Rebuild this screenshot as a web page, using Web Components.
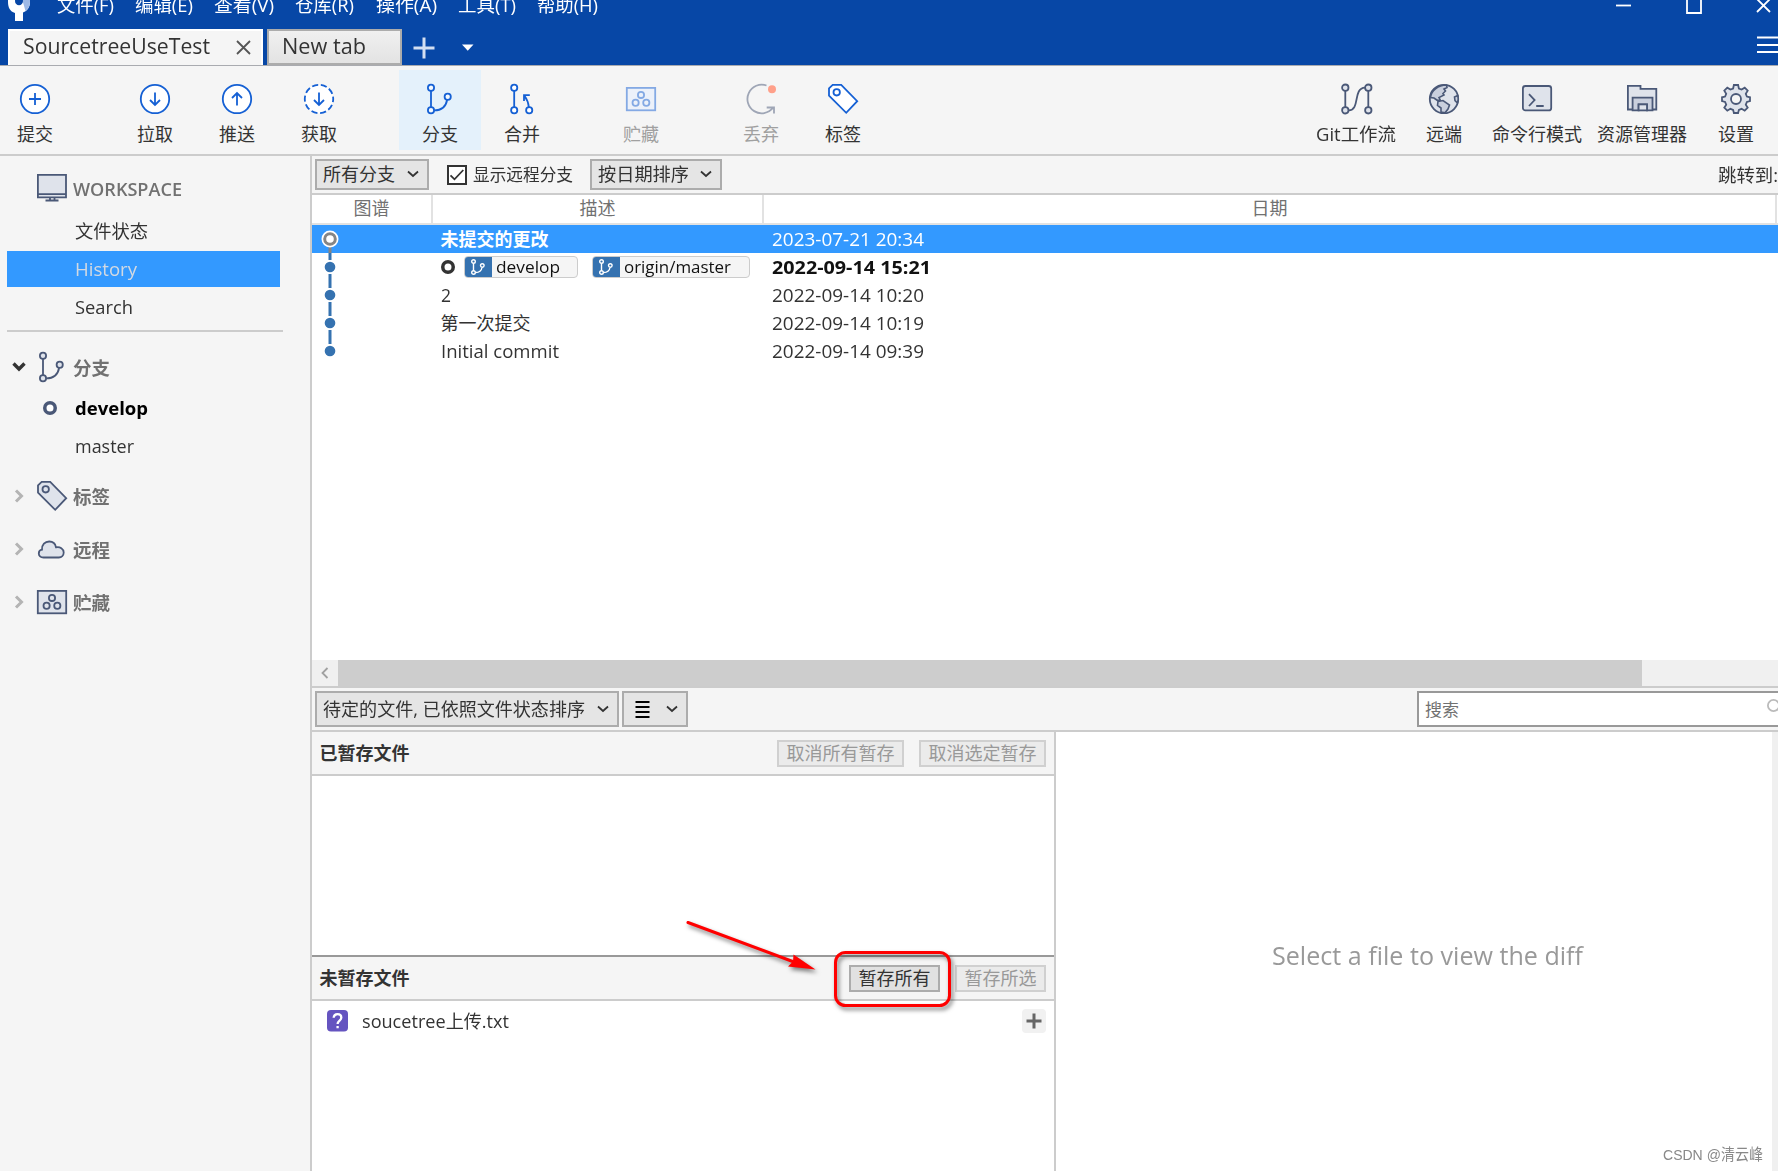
<!DOCTYPE html>
<html lang="zh-CN">
<head>
<meta charset="utf-8">
<title>Sourcetree</title>
<style>
html,body{margin:0;height:100%;overflow:hidden;background:#fff}
body{font-family:"Open Sans","Noto Sans CJK SC",sans-serif;font-size:18px;color:#333;line-height:24px}
</style>
</head>
<body>
<source-tree></source-tree>
<script>
const define=(name,html,setup)=>{
  const t=document.createElement('template');
  t.innerHTML=html;
  customElements.define(name,class extends HTMLElement{
    constructor(){super();this.attachShadow({mode:'open'}).append(t.content.cloneNode(true));}
    connectedCallback(){if(setup&&!this.ready){this.ready=true;setup(this,this.shadowRoot);}}
  });
};
const ICONS={
 commit:[30,30,'<circle cx="15" cy="15" r="14.2" fill="#fff"/><path d="M15 9v12M9 15h12"/>'],
 pull:[30,30,'<circle cx="15" cy="15" r="14.2" fill="#fff"/><path d="M15 8.5v12.5M10 16l5 5 5-5"/>'],
 push:[30,30,'<circle cx="15" cy="15" r="14.2" fill="#fff"/><path d="M15 21.5V9M10 14l5-5 5 5"/>'],
 fetch:[30,30,'<circle cx="15" cy="15" r="14.2" fill="#fff" stroke-dasharray="6.2 2.72" stroke-dashoffset="3"/><path d="M15 8.5v12.5M10 16l5 5 5-5"/>'],
 branch:[30,30,'<path d="M6 7v16M9.3 26.4c7 0 11.600-4 12.800-10.400"/><g class="f"><circle cx="6" cy="3.700" r="3.100"/><circle cx="6" cy="26.300" r="3.100"/><circle cx="22.700" cy="12.700" r="3.100"/></g>'],
 merge:[30,30,'<path d="M7.200 7v16M21.800 23c-.3-4-2-8-4.500-11.500M22.800 11.200H17V17"/><g class="f"><circle cx="7.200" cy="3.700" r="3.100"/><circle cx="7.200" cy="26.300" r="3.100"/><circle cx="22.200" cy="26.300" r="3.100"/></g>'],
 stash:[30,30,'<g class="f"><rect x=".8" y="3.900" width="28.400" height="22.400"/><circle cx="15" cy="10.900" r="3.100"/><circle cx="9.600" cy="18.700" r="3.100"/><circle cx="20.300" cy="18.700" r="3.100"/></g>'],
 discard:[30,30,'<path opacity=".5" d="M20.500 1.500A14.300 14.300 0 1 0 27 23.800M20.700 23.500h7.300v6"/><circle cx="26" cy="5.300" r="4" fill="#ffa08a" stroke="none"/>'],
 tag:[30,30,'<path class="f" d="M4.700 .9H13.200L29.200 17.200 18.200 28.800 1 11.700V4.300Z"/><circle cx="8.700" cy="8.300" r="3.200"/>'],
 flow:[30,30,'<path d="M4.300 7v16M27.300 7v16M7.800 26.300C19.500 26 11.500 4.200 24 3.700"/><g class="f"><circle cx="4.300" cy="3.700" r="3.200"/><circle cx="27.300" cy="3.700" r="3.200"/><circle cx="4.300" cy="26.300" r="3.200"/><circle cx="27.300" cy="26.300" r="3.200"/></g>'],
 globe:[30,30,'<circle class="f" cx="15" cy="15" r="14.2"/><g fill="#c9cfdd" stroke-width="1.600"><path d="M17.500 1l.5 2.500-3 1.500 1.500 2-2.500 2.500 1 1.500-5 2.500 1 2-2.500 1-3.500-2.500-3.500-.5C2 7 9 1 17.500 1ZM9 17.500l5-1 6.500 4.500-1.500 4-3 3.800-4-.8V24l-3.500-2.500ZM28.800 11.500l-3.300 1.500.5 3.500 2.500 2.500c1-3 1-5 .3-7.500Z"/></g>'],
 term:[30,30,'<rect class="f" x=".9" y="2" width="28.300" height="24.400" rx="2.500"/><path d="M7 10.200l5.600 5.800L7 22M14.200 22h7.500"/>'],
 folder:[30,30,'<path class="f" d="M.9 1.900H13.500V4.800H29.300V25.500H.9Z"/><path fill="#c9cfdd" d="M5.600 13.700H25.500V26.400H20V20.400H11.600V26.400H5.600Z"/><rect class="f" x="11.600" y="20.400" width="8.400" height="6"/>'],
 gear:[30,30,'<path class="f" d="M12.900 1h4.200l.8 3.500 2.700 1.100 3.100-1.900 3 3-1.900 3.100 1.100 2.700 3.100.8v3.800l-3.100.8-1.100 2.700 1.900 3.100-3 3-3.100-1.900-2.700 1.100-.8 3.100h-4.200l-.8-3.100-2.700-1.100-3.100 1.900-3-3 1.900-3.100-1.100-2.700-3.100-.8v-3.800l3.100-.8 1.100-2.700-1.900-3.100 3-3 3.100 1.900 2.700-1.100Z"/><circle cx="15" cy="15" r="5" fill="#f5f5f5"/>'],
 monitor:[30,28,'<path class="f" d="M.9 .9H29V23.400H.9Z"/><path d="M1 20.200H29M8.500 26.500h13M13 24v2M17.500 24v2"/>'],
 cloud:[30,30,'<path class="f" d="M6.500 23.500C3.500 23.500 1.800 21.700 1.800 19.400 1.800 17.200 3.300 15.800 5 15.600 4.700 10.700 8 7.500 12.200 7.500c3.700 0 6.200 2.300 6.800 5.800 4-.8 7.700 1.300 7.700 5.300 0 3-2.200 4.900-4.900 4.900Z"/>'],
 down:[12,8,'<path d="M1 1.500l5 4.500 5-4.500"/>'],
 open:[14,10,'<path stroke-width="3.400" d="M1.500 1.500L7 7l5.500-5.500"/>'],
 closed:[10,14,'<path stroke-width="3" d="M2 1.500L7.500 7 2 12.500"/>'],
 left:[8,12,'<path d="M6.500 1L1.500 6l5 5"/>'],
 close:[15,15,'<path d="M1 1l13 13M14 1L1 14"/>'],
 plus:[22,22,'<path stroke-width="3" d="M11 .5v21M.5 11h21"/>'],
 caret:[12,7,'<path fill="currentColor" stroke="none" d="M0 .5h11.500L5.750 6.800Z"/>'],
 min:[15,3,'<path d="M0 1.500h15"/>'],
 max:[16,16,'<path d="M1 0v15h14V0M1 1h14"/>'],
 menu:[22,17,'<path d="M0 1.500h22M0 9h22M0 16h22"/>'],
 list:[15,17,'<path d="M.5 1h14M.5 6h14M.5 11h14M.5 16h14"/>'],
 tick:[16,16,'<path d="M1.500 8.300l4 4L14.300 3"/>'],
 ring:[14,14,'<circle cx="7" cy="7" r="5.250" stroke-width="3.500" fill="#fff"/>'],
 search:[14,14,'<circle cx="6.500" cy="6.500" r="5.600"/><path d="M11 11l3 3"/>'],
 add:[24,24,'<rect width="24" height="24" rx="4" fill="#f1f1f1" stroke="none"/><path stroke-width="3" d="M12 4.500v15M4.500 12h15"/>'],
 unknown:[21,22,'<rect width="21" height="21.500" rx="4" fill="#6554c0" stroke="none"/><path stroke="#fff" stroke-width="2.300" d="M6.700 7.800C6.800 5.500 8.300 4.200 10.500 4.200s3.800 1.400 3.800 3.500c0 2.800-3.700 3-3.700 6.300M10.600 15.900v2.400"/>'],
 logo:[26,21,'<path fill="#fff" stroke="none" d="M9 21v-8C4 11.500 2 7.500 2 2V-9H24V2c0 5-2.500 9-7 10.500V21Z"/><path fill="#9db9e6" stroke="none" d="M15.500 -3H24V2c0 4-1.500 7-4.500 9Z"/><ellipse cx="13" cy="1" rx="4" ry="4.300" fill="#0747a6" stroke="none"/>']
};
define('st-icon',`<style>:host{display:block;flex:none}svg{display:block;overflow:visible;fill:none;stroke:currentColor;stroke-width:1.8}.f{fill:var(--icon-fill,none)}</style>`,(el,root)=>{
  const [w,h,p]=ICONS[el.getAttribute('name')];
  root.innerHTML+=`<svg width="${w}" height="${h}" viewBox="0 0 ${w} ${h}">${p}</svg>`;
});

define('title-bar',`<style>
:host{display:flex;flex-direction:column;height:65px;background:#0747a6;border-bottom:1px solid #a9abb0;color:#fff;overflow:hidden}
.top{height:30px;display:flex;justify-content:space-between}
.l,.r{display:flex;align-items:flex-start}
.l st-icon{margin:0 24.500px 0 6px}
.menus{display:flex;gap:21.300px;margin-top:-7px}
.r{padding-right:7px}
.r .a{margin:4px 55px 0 0}.r .b{margin:-2.500px 54px 0 0}.r .c{margin-top:-2px}
.tabs{flex:1;display:flex;align-items:flex-start;padding-left:8px}
.tabs .p{margin:8px 27px 0 11px;color:#d3dff2}.tabs .d{margin-top:15px}
.tabs .m{margin:7px -1px 0 auto}
</style>
<div class="top"><div class="l"><st-icon name="logo"></st-icon><div class="menus"><fit-text w="57">文件(F)</fit-text><fit-text w="58">编辑(E)</fit-text><fit-text w="60">查看(V)</fit-text><fit-text w="59">仓库(R)</fit-text><fit-text w="61">操作(A)</fit-text><fit-text w="58">工具(T)</fit-text><fit-text w="61">帮助(H)</fit-text></div></div>
<div class="r"><st-icon class="a" name="min"></st-icon><st-icon class="b" name="max"></st-icon><st-icon class="c" name="close"></st-icon></div></div>
<div class="tabs"><repo-tab active style="width:255px"><fit-text w="187">SourcetreeUseTest</fit-text></repo-tab><repo-tab style="width:135px;margin-left:4px"><fit-text w="84">New tab</fit-text></repo-tab><st-icon class="p" name="plus"></st-icon><st-icon class="d" name="caret"></st-icon><st-icon class="m" name="menu"></st-icon></div>`);
define('repo-tab',`<style>
:host{display:flex;box-sizing:border-box;height:36px;border:2px solid #acacac;background:linear-gradient(#f0f0f0,#e3e3e3);color:#333;font-size:21px;line-height:30px;padding:0 13px 0 13px;justify-content:space-between}
:host([active]){background:#f5f5f5;border-color:#fff;border-bottom:0;padding:0 10px 0 12.500px}
st-icon{display:none;margin-top:9px;color:#555}:host([active]) st-icon{display:block}
</style><slot></slot><st-icon name="close"></st-icon>`);
define('tool-button',`<style>
:host{display:flex;flex:none;flex-direction:column;align-items:center;box-sizing:border-box;height:80px;padding-top:14px;gap:8px;width:82px;color:#333;white-space:nowrap}
st-icon{color:#1560d4;--icon-fill:#fff}
:host([on]){background:#e4f1fb}:host([on]) st-icon{--icon-fill:#f4f9fe}
:host([gray]) st-icon{color:#4a5877;--icon-fill:#dfe3eb}
:host([off]){color:#a0a0a0}:host([off]:not([gray])) st-icon{opacity:.5;--icon-fill:#e4efff}
</style><slot></slot>`,(el,root)=>{
  const n=document.createElement('st-icon');
  n.setAttribute('name',el.getAttribute('icon'));
  root.querySelector('slot').before(n);
});
define('main-toolbar',`<style>
:host{display:flex;height:84px;box-sizing:content-box;padding:4px 4px 0 0;background:#f5f5f5;border-bottom:2px solid #ccc}
div{flex:1}
</style>
<tool-button icon="commit" style="width:70px"><fit-text w="36">提交</fit-text></tool-button>
<tool-button icon="pull" style="margin-left:44px">拉取</tool-button><tool-button icon="push">推送</tool-button><tool-button icon="fetch">获取</tool-button>
<tool-button icon="branch" on style="margin-left:39px">分支</tool-button><tool-button icon="merge">合并</tool-button>
<tool-button icon="stash" off style="margin-left:37px">贮藏</tool-button>
<tool-button icon="discard" off gray style="margin-left:38px">丢弃</tool-button><tool-button icon="tag">标签</tool-button>
<div></div>
<tool-button icon="flow" gray style="width:88px"><fit-text w="80">Git工作流</fit-text></tool-button>
<tool-button icon="globe" gray style="width:88px">远端</tool-button>
<tool-button icon="term" gray style="width:98px">命令行模式</tool-button>
<tool-button icon="folder" gray style="width:112px">资源管理器</tool-button>
<tool-button icon="gear" gray style="width:76px">设置</tool-button>`);

define('side-item',`<style>
:host{display:flex;align-items:center;height:36px;margin:0 30px 2px 7px;padding-left:67.500px;color:#333}
:host([on]){background:#39f;color:#d3d9e2}
:host([current]){font-weight:700;color:#000}
st-icon{display:none;color:#4a5877;margin:0 17.500px 0 -31.500px}
:host([current]) st-icon{display:block}
</style><st-icon name="ring"></st-icon><slot></slot>`);
define('side-group',`<style>
:host{display:flex;align-items:center;height:36px;padding-left:12px;font-weight:700;color:#717171}
.arrow{width:14px;margin-right:11px;display:flex;justify-content:center;color:#b4b4b4}
:host([open]) .arrow{color:#333}
.i{color:#4a5877;--icon-fill:#dfe3eb;margin-right:5.500px}
</style><div class="arrow"></div><slot></slot>`,(el,root)=>{
  const a=root.querySelector('.arrow');
  if(!el.hasAttribute('bare'))a.innerHTML=`<st-icon name="${el.hasAttribute('open')?'open':'closed'}"></st-icon>`;
  a.insertAdjacentHTML('afterend',`<st-icon class="i" name="${el.getAttribute('icon')}"></st-icon>`);
});
define('side-bar',`<style>
:host{display:flex;flex-direction:column;box-sizing:border-box;background:#f5f5f5;border-right:2px solid #ccc;padding-top:14px}
hr{border:0;background:#ccc;height:2px;margin:3px 27px 19px 7px;flex:none}
side-group,side-item{flex:none}
</style>
<side-group bare icon="monitor"><fit-text w="109" style="font-weight:600;margin-top:1px">WORKSPACE</fit-text></side-group>
<side-item style="margin-top:7px"><fit-text w="73">文件状态</fit-text></side-item><side-item on><fit-text w="62">History</fit-text></side-item><side-item><fit-text w="58">Search</fit-text></side-item>
<hr>
<side-group open icon="branch" style="margin-top:-2px"><fit-text w="37" style="margin-top:2px">分支</fit-text></side-group>
<side-item current style="margin-top:5px"><fit-text w="73">develop</fit-text></side-item><side-item><fit-text w="59">master</fit-text></side-item>
<side-group icon="tag" style="margin-top:12px"><fit-text w="37" style="margin-top:2px">标签</fit-text></side-group>
<side-group icon="cloud" style="margin-top:17px"><fit-text w="37" style="margin-top:2px">远程</fit-text></side-group>
<side-group icon="stash" style="margin-top:17px"><fit-text w="37" style="margin-top:2px">贮藏</fit-text></side-group>`);

define('select-box',`<style>
:host{display:flex;flex:none;box-sizing:border-box;align-items:center;justify-content:space-between;border:2px solid #acacac;background:#e5e5e5;padding:0 8px 0 6px;color:#333}
</style><slot></slot><st-icon name="down"></st-icon>`);
define('filter-bar',`<style>
:host{display:flex;flex:none;height:37px;align-items:center;background:#f5f5f5;border-bottom:2px solid #ccc;padding-left:3px;overflow:hidden}
select-box{height:31px;margin-top:-1px}
.ck{box-sizing:border-box;width:20px;height:20px;border:2px solid #333;background:#fff;margin:0 6px 0 18px}
.j{margin-left:auto;white-space:nowrap}
</style>
<select-box style="width:114px"><fit-text w="72">所有分支</fit-text></select-box>
<div class="ck"><st-icon name="tick"></st-icon></div><fit-text w="100" style="font-size:16.500px;margin-right:17px">显示远程分支</fit-text>
<select-box style="width:132px"><fit-text w="91">按日期排序</fit-text></select-box>
<fit-text class="j" w="60">跳转到:</fit-text>`);
define('ref-badge',`<style>
:host{display:flex;box-sizing:border-box;height:22px;border:1px solid #ccc;border-radius:4px;background:#f5f5f5;color:#111;align-items:center;font-size:17px;overflow:hidden}
i{width:27px;height:22px;margin:-1px 4px -1px -1px;background:#3572b0;display:flex;align-items:center;justify-content:center;padding-left:1px;flex:none}
svg{fill:none;stroke:#fff;stroke-width:1.400}
</style><i><svg width="14" height="16" viewBox="0 0 14 16"><path d="M2.500 4.500v7M4.500 13.500C8 13.500 10.500 11.500 11 8.500"/><circle cx="2.500" cy="2.500" r="1.800"/><circle cx="2.500" cy="13.500" r="1.800"/><circle cx="11.300" cy="6.500" r="1.800"/></svg></i><slot></slot>`);
define('commit-row',`<style>
:host{display:grid;grid-template-columns:121px 331px 1fr;height:28px;align-items:center;color:#333;font-size:18.500px}
:host([on]){background:#39f;color:#fff}
svg{display:block;overflow:visible}
.d{display:flex;align-items:center;padding-left:7.500px;height:28px}.t{padding-left:7.500px;display:flex}
:host([head]) .t{font-weight:700;color:#111}
</style><svg width="121" height="28"></svg><div class="d"><slot></slot></div><div class="t"><slot name="date"></slot></div>`,(el,root)=>{
  const s=root.querySelector('svg'),k=el.getAttribute('node');
  s.innerHTML=k==='work'
   ?'<path d="M18 21v7" stroke="#858585" stroke-width="3"/><circle cx="18" cy="14" r="8.500" fill="#fff"/><circle cx="18" cy="14" r="5.300" fill="#fff" stroke="#858585" stroke-width="3"/>'
   :`<path d="M18 0v7${k==='last'?'':'M18 21v7'}" stroke="#3572b0" stroke-width="3"/><circle cx="18" cy="14" r="5.300" fill="#3572b0"/>`;
});
define('commit-list',`<style>
:host{display:flex;flex-direction:column;height:465px;background:#fff;flex:none}
.h{display:grid;grid-template-columns:121px 331px 1013px;height:28px;border-bottom:2px solid #e2e2e2;color:#717171;text-align:center;line-height:26px}
.h span{border-right:2px solid #e2e2e2}
</style>
<div class="h"><span>图谱</span><span>描述</span><span>日期</span></div>
<commit-row on node="work"><fit-text w="108" style="font-weight:700;font-size:18px">未提交的更改</fit-text><fit-text slot="date" w="152">2023-07-21 20:34</fit-text></commit-row>
<commit-row head node="mid"><st-icon name="ring"></st-icon><ref-badge style="width:114px;margin:0 14px 0 9px"><fit-text w="64">develop</fit-text></ref-badge><ref-badge style="width:158px"><fit-text w="107">origin/master</fit-text></ref-badge><fit-text slot="date" w="159">2022-09-14 15:21</fit-text></commit-row>
<commit-row node="mid"><fit-text w="10">2</fit-text><fit-text slot="date" w="152">2022-09-14 10:20</fit-text></commit-row>
<commit-row node="mid"><fit-text w="90" style="font-size:18px">第一次提交</fit-text><fit-text slot="date" w="152">2022-09-14 10:19</fit-text></commit-row>
<commit-row node="last"><fit-text w="118">Initial commit</fit-text><fit-text slot="date" w="152">2022-09-14 09:39</fit-text></commit-row>`);
define('h-scroll',`<style>
:host{display:flex;height:26px;flex:none;background:#f0f0f0;border-bottom:2px solid #ccc}
.b{width:26px;display:flex;align-items:center;justify-content:center;color:#a0a0a0}
.t{width:1304px;background:#cdcdcd}
</style><div class="b"><st-icon name="left"></st-icon></div><div class="t"></div>`);
define('file-bar',`<style>
:host{display:flex;height:42px;flex:none;align-items:center;background:#f5f5f5;border-bottom:2px solid #ccc;padding-left:3px;gap:3px;overflow:hidden}
select-box{height:36px}
.s{box-sizing:border-box;height:36px;width:380px;flex:none;margin-left:726px;background:#fff;border:2px solid #999;padding:0 14.500px 0 6px;display:flex;align-items:center;color:#717171;font-size:17px}
.s st-icon{margin:-6px 0 0 auto;color:#bbb}.l{color:#000;margin-left:5px}
</style>
<select-box style="width:304px"><fit-text w="262">待定的文件, 已依照文件状态排序</fit-text></select-box>
<select-box style="width:66px"><st-icon class="l" name="list"></st-icon></select-box>
<div class="s"><fit-text w="34" style="margin-top:1px">搜索</fit-text><st-icon name="search"></st-icon></div>`);
define('push-button',`<style>
:host{display:flex;box-sizing:border-box;height:27px;align-items:center;justify-content:center;border:2px solid #acacac;background:#e1e1e1;color:#333;white-space:nowrap}
:host([off]){border-color:#d0d0d0;background:#ebebeb;color:#999}
</style><slot></slot>`);
define('stage-pane',`<style>
:host{display:flex;flex-direction:column;background:#fff}
.h{height:42px;flex:none;display:flex;align-items:center;background:#f5f5f5;border-bottom:2px solid #ccc;padding:0 8px 0 7.500px;gap:15px}
b{margin-right:auto}
</style><div class="h"><b><slot name="title"></slot></b><slot name="actions"></slot></div><slot></slot>`);
define('file-row',`<style>
:host{display:flex;align-items:center;padding:0 8px 0 15px;height:40px}
.n{margin:-1px auto 0 13.500px}.a{color:#666}
</style><st-icon name="unknown"></st-icon><div class="n"><slot></slot></div><st-icon class="a" name="add"></st-icon>`);
define('diff-view',`<style>
:host{display:flex;flex:1;min-width:0;box-sizing:border-box;position:relative;align-items:center;justify-content:center;border-right:6px solid #f0f0f0;padding:7px 0 0 26px;color:#999;font-size:25.500px;line-height:34px}
.w{position:absolute;right:9px;bottom:4px;font-size:15.500px;line-height:24px;color:#888;font-family:"Liberation Sans","Noto Sans CJK SC",sans-serif}
</style><fit-text w="311">Select a file to view the diff</fit-text><div class="w"><fit-text w="100">CSDN @清云峰</fit-text></div>`);
define('red-callout',`<style>
:host{position:absolute;left:680px;top:910px;pointer-events:none}
svg{display:block;overflow:visible;filter:drop-shadow(2px 3px 2px rgba(0,0,0,.5))}
</style><svg width="280" height="105"><path d="M8 12.500L114 52" stroke="red" stroke-width="3" stroke-linecap="round"/><path d="M135.500 59.500L113.500 44.500 113 51.500 108 56.500Z" fill="red"/><rect x="155.500" y="42.500" width="114" height="53" rx="10" fill="none" stroke="red" stroke-width="3"/></svg>`);
define('source-tree',`<style>
:host{display:flex;flex-direction:column;width:1778px;height:1171px;overflow:hidden;position:relative}
.body{flex:1;display:flex;min-height:0}
side-bar{width:312px;flex:none}
.main{flex:1;min-width:0;display:flex;flex-direction:column}
.low{flex:1;display:flex;min-height:0}
.stages{width:742px;flex:none;border-right:2px solid #ccc;display:flex;flex-direction:column}
.one{height:223px;flex:none;border-bottom:2px solid #999}.two{flex:1}
</style>
<title-bar></title-bar><main-toolbar></main-toolbar>
<div class="body"><side-bar></side-bar><div class="main">
<filter-bar></filter-bar><commit-list></commit-list><h-scroll></h-scroll><file-bar></file-bar>
<div class="low"><div class="stages">
<stage-pane class="one"><fit-text slot="title" w="90" style="font-weight:700">已暂存文件</fit-text><push-button slot="actions" off style="width:127px">取消所有暂存</push-button><push-button slot="actions" off style="width:127px">取消选定暂存</push-button></stage-pane>
<stage-pane class="two"><fit-text slot="title" w="90" style="font-weight:700">未暂存文件</fit-text><push-button slot="actions" style="width:91px">暂存所有</push-button><push-button slot="actions" off style="width:91px">暂存所选</push-button><file-row><fit-text w="147">soucetree上传.txt</fit-text></file-row></stage-pane>
</div><diff-view></diff-view></div></div></div>
<red-callout></red-callout>`);
/* Condenses or widens its text to the width given in w. */
define('fit-text',`<style>:host{display:block;flex:none;white-space:nowrap}span{display:inline-block;transform-origin:0 50%}</style><span><slot></slot></span>`,(el,root)=>{
  const s=root.querySelector('span'),w=+el.getAttribute('w'),n=s.getBoundingClientRect().width;
  el.style.width=w+'px';
  s.style.transform=`scaleX(${w/n})`;
});
</script>
</body>
</html>
